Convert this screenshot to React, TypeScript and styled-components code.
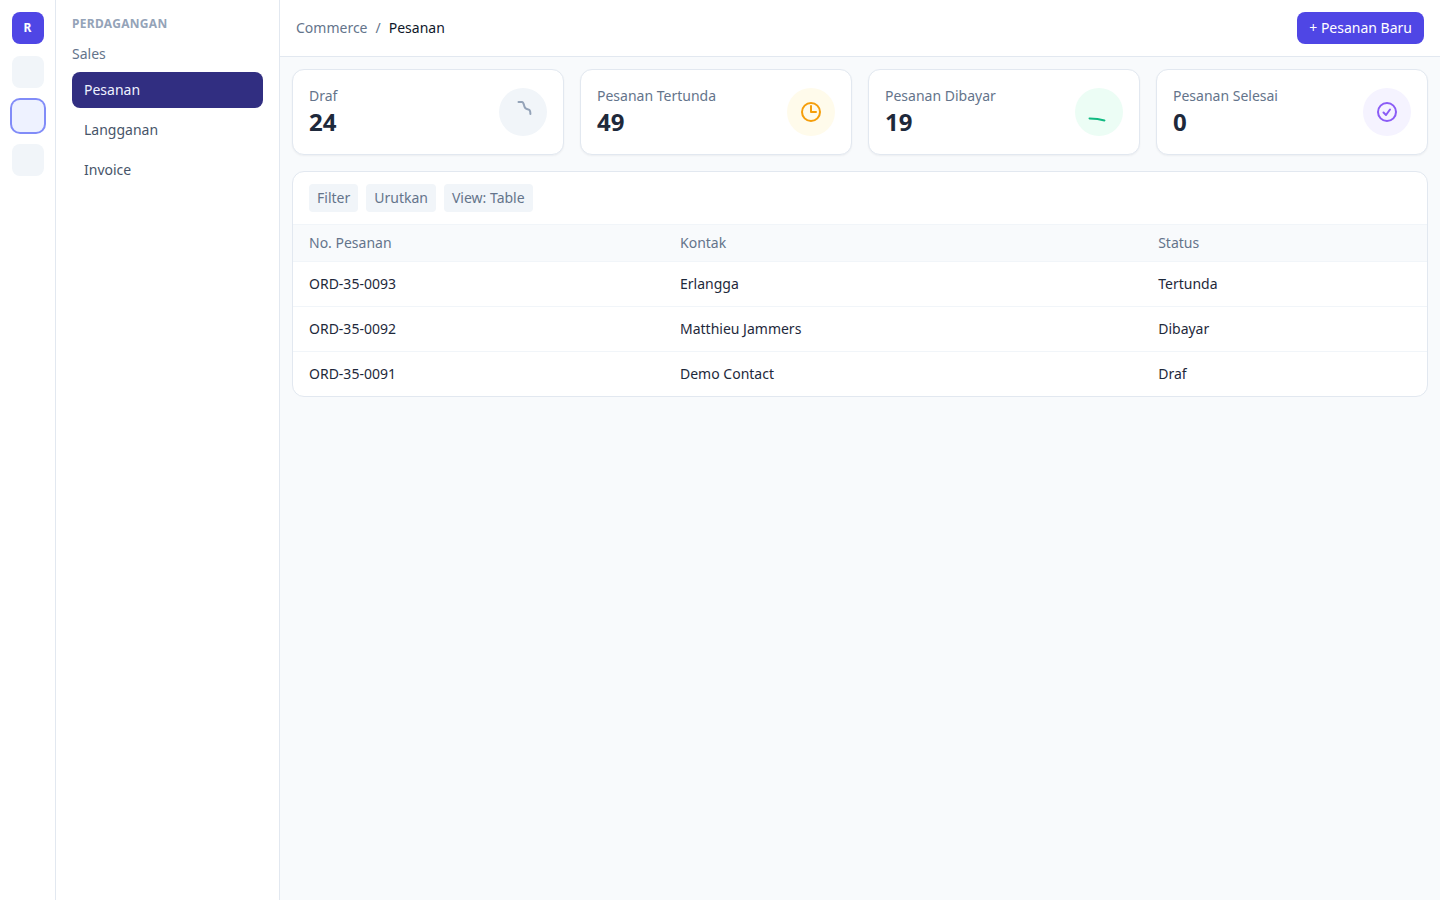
import React from "react";
import styled, { createGlobalStyle } from "styled-components";

const GlobalStyle = createGlobalStyle`
	html, body {
		margin: 0;
		height: 100%;
		background: #f8fafc;
		font-family: "Noto Sans", sans-serif;
		font-size: 14px;
		line-height: 20px;
		color: #0f172a;
	}
	* {
		box-sizing: border-box;
	}
`;

const Shell = styled.div`
	display: flex;
	height: 900px;
	overflow: hidden;
`;

const Rail = styled.aside`
	width: 56px;
	flex: none;
	display: flex;
	flex-direction: column;
	align-items: center;
	gap: 12px;
	padding: 12px 0;
	background: #ffffff;
	border-right: 1px solid #e2e8f0;
`;

const RailItem = styled.div<{ $active?: boolean; $brand?: boolean }>`
	width: 32px;
	height: 32px;
	border-radius: 8px;
	display: flex;
	align-items: center;
	justify-content: center;
	font-size: 12px;
	font-weight: 700;
	color: #ffffff;
	background: ${p => (p.$brand ? "#4f46e5" : p.$active ? "#eef2ff" : "#f1f5f9")};
	box-shadow: ${p => (p.$active ? "0 0 0 2px #818cf8" : "none")};
`;

const Sidebar = styled.nav`
	width: 224px;
	flex: none;
	padding: 16px;
	background: #ffffff;
	border-right: 1px solid #e2e8f0;
`;

const SectionTitle = styled.div`
	font-size: 12px;
	line-height: 16px;
	font-weight: 700;
	letter-spacing: 0.3px;
	color: #94a3b8;
`;

const GroupTitle = styled.div`
	margin: 12px 0 8px;
	color: #64748b;
`;

const NavList = styled.div`
	display: flex;
	flex-direction: column;
	gap: 4px;
`;

const NavItem = styled.a<{ $active?: boolean }>`
	height: 36px;
	padding: 0 12px;
	display: flex;
	align-items: center;
	border-radius: 8px;
	color: ${p => (p.$active ? "#eef2ff" : "#475569")};
	background: ${p => (p.$active ? "#312e81" : "transparent")};
`;

const Main = styled.div`
	flex: 1;
	min-width: 0;
	display: flex;
	flex-direction: column;
`;

const Header = styled.header`
	height: 57px;
	flex: none;
	padding: 0 16px;
	display: flex;
	align-items: center;
	justify-content: space-between;
	background: #ffffff;
	border-bottom: 1px solid #e2e8f0;
`;

const Breadcrumb = styled.div`
	display: flex;
	gap: 8px;
	color: #64748b;
`;

const Current = styled.span`
	color: #0f172a;
`;

const PrimaryButton = styled.button`
	height: 32px;
	padding: 0 12px;
	border: 0;
	border-radius: 8px;
	background: #4f46e5;
	color: #ffffff;
	font: inherit;
`;

const Content = styled.main`
	padding: 12px;
	display: flex;
	flex-direction: column;
	gap: 16px;
`;

const Stats = styled.section`
	display: grid;
	grid-template-columns: repeat(4, 1fr);
	gap: 16px;
`;

const StatCard = styled.div`
	height: 86px;
	padding: 0 16px;
	display: flex;
	align-items: center;
	justify-content: space-between;
	background: #ffffff;
	border: 1px solid #e2e8f0;
	border-radius: 12px;
	box-shadow: 0 1px 2px rgb(15 23 42 / 5%);
`;

const StatLabel = styled.div`
	color: #64748b;
`;

const StatValue = styled.div`
	font-size: 24px;
	line-height: 32px;
	font-weight: 700;
	color: #1e293b;
`;

const StatIcon = styled.div<{ $bg: string; $fg: string }>`
	width: 48px;
	height: 48px;
	border-radius: 50%;
	display: flex;
	align-items: center;
	justify-content: center;
	background: ${p => p.$bg};
	color: ${p => p.$fg};

	svg {
		width: 24px;
		height: 24px;
		fill: none;
		stroke: currentColor;
		stroke-width: 2;
		stroke-linecap: round;
		stroke-linejoin: round;
	}
`;

const TableCard = styled.section`
	background: #ffffff;
	border: 1px solid #e2e8f0;
	border-radius: 12px;
	overflow: hidden;
`;

const Toolbar = styled.div`
	height: 52px;
	padding: 12px 16px;
	display: flex;
	gap: 8px;
`;

const Chip = styled.button`
	height: 28px;
	padding: 0 8px;
	border: 0;
	border-radius: 4px;
	background: #f1f5f9;
	color: #64748b;
	font: inherit;
`;

const Table = styled.table`
	width: 100%;
	border-collapse: collapse;
	table-layout: fixed;
`;

const HeadCell = styled.th`
	height: 37px;
	padding: 0 16px;
	text-align: left;
	font-weight: 400;
	color: #64748b;
	background: #f8fafc;
	border-top: 1px solid #f1f5f9;
	border-bottom: 1px solid #f1f5f9;
`;

const Cell = styled.td`
	height: 45px;
	padding: 0 16px;
	color: #1e293b;
	border-bottom: 1px solid #f1f5f9;

	tr:last-child & {
		height: 44px;
		border-bottom: 0;
	}
`;

const stats = [
	{
		label: "Draf",
		value: 24,
		bg: "#f1f5f9",
		fg: "#94a3b8",
		icon: <path d="M7.5 2h3.5c1.5 0 1.8 2.5 2.4 4.5.5 1.7 2 2.8 4 3 1.5.2 2 1 2 4.5" />,
	},
	{
		label: "Pesanan Tertunda",
		value: 49,
		bg: "#fffbeb",
		fg: "#f59e0b",
		icon: (
			<>
				<circle cx="12" cy="12" r="9" />
				<path d="M12 6V12h5" />
			</>
		),
	},
	{
		label: "Pesanan Dibayar",
		value: 19,
		bg: "#ecfdf5",
		fg: "#10b981",
		icon: <path d="M2.5 18.4l8 .5 7 1.5" />,
	},
	{
		label: "Pesanan Selesai",
		value: 0,
		bg: "#f5f3ff",
		fg: "#8b5cf6",
		icon: (
			<>
				<circle cx="12" cy="12" r="9" />
				<path d="M8.5 12.5L11 15l4-5.5" />
			</>
		),
	},
];

const orders = [
	{ id: "ORD-35-0093", contact: "Erlangga", status: "Tertunda" },
	{ id: "ORD-35-0092", contact: "Matthieu Jammers", status: "Dibayar" },
	{ id: "ORD-35-0091", contact: "Demo Contact", status: "Draf" },
];

export default function App() {
	return (
		<>
			<GlobalStyle />
			<Shell>
				<Rail>
					<RailItem $brand>R</RailItem>
					<RailItem />
					<RailItem $active />
					<RailItem />
				</Rail>
				<Sidebar>
					<SectionTitle>PERDAGANGAN</SectionTitle>
					<GroupTitle>Sales</GroupTitle>
					<NavList>
						<NavItem $active>Pesanan</NavItem>
						<NavItem>Langganan</NavItem>
						<NavItem>Invoice</NavItem>
					</NavList>
				</Sidebar>
				<Main>
					<Header>
						<Breadcrumb>
							<span>Commerce</span>
							<span>/</span>
							<Current>Pesanan</Current>
						</Breadcrumb>
						<PrimaryButton>+ Pesanan Baru</PrimaryButton>
					</Header>
					<Content>
						<Stats>
							{stats.map(stat => (
								<StatCard key={stat.label}>
									<div>
										<StatLabel>{stat.label}</StatLabel>
										<StatValue>{stat.value}</StatValue>
									</div>
									<StatIcon $bg={stat.bg} $fg={stat.fg}>
										<svg viewBox="0 0 24 24">{stat.icon}</svg>
									</StatIcon>
								</StatCard>
							))}
						</Stats>
						<TableCard>
							<Toolbar>
								<Chip>Filter</Chip>
								<Chip>Urutkan</Chip>
								<Chip>View: Table</Chip>
							</Toolbar>
							<Table>
								<colgroup>
									<col style={{ width: 371 }} />
									<col style={{ width: 478.2 }} />
									<col />
								</colgroup>
								<thead>
									<tr>
										<HeadCell>No. Pesanan</HeadCell>
										<HeadCell>Kontak</HeadCell>
										<HeadCell>Status</HeadCell>
									</tr>
								</thead>
								<tbody>
									{orders.map(order => (
										<tr key={order.id}>
											<Cell>{order.id}</Cell>
											<Cell>{order.contact}</Cell>
											<Cell>{order.status}</Cell>
										</tr>
									))}
								</tbody>
							</Table>
						</TableCard>
					</Content>
				</Main>
			</Shell>
		</>
	);
}
